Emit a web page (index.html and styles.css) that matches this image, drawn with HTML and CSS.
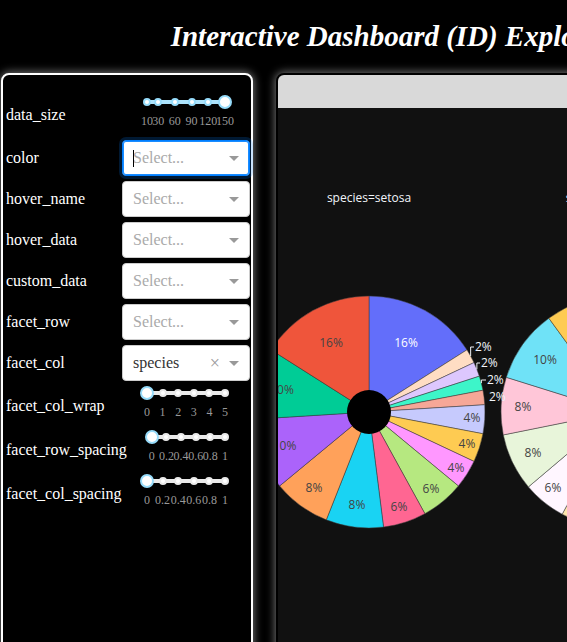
FILE: index.html
```html
<!DOCTYPE html>
<html lang="en">
<head>
<meta charset="utf-8">
<title>Interactive Dashboard (ID) Explorer</title>
<link rel="stylesheet" href="styles.css">
</head>
<body>
<div class="app">
  <header class="header">
    <h1 class="title">Interactive Dashboard (ID) Explorer</h1>
  </header>
  <main class="main">
    <aside class="controls">
      <div class="row row-slider">
        <span class="row-label">data_size</span>
        <div class="slider">
          <div class="rail">
            <div class="track" style="width:100%"></div>
            <span class="dot is-active" style="left:0%"></span>
            <span class="dot is-active" style="left:14.286%"></span>
            <span class="dot is-active" style="left:35.714%"></span>
            <span class="dot is-active" style="left:57.143%"></span>
            <span class="dot is-active" style="left:78.571%"></span>
            <span class="dot is-active" style="left:100%"></span>
            <span class="handle" style="left:100%"></span>
            <span class="mark" style="left:0%">10</span>
            <span class="mark" style="left:14.286%">30</span>
            <span class="mark" style="left:35.714%">60</span>
            <span class="mark" style="left:57.143%">90</span>
            <span class="mark" style="left:78.571%">120</span>
            <span class="mark" style="left:100%">150</span>
          </div>
        </div>
      </div>

      <div class="row row-select">
        <span class="row-label">color</span>
        <div class="select is-focused">
          <span class="select-cursor"></span>
          <span class="select-placeholder">Select...</span>
          <span class="select-arrow"></span>
        </div>
      </div>
      <div class="row row-select">
        <span class="row-label">hover_name</span>
        <div class="select">
          <span class="select-placeholder">Select...</span>
          <span class="select-arrow"></span>
        </div>
      </div>
      <div class="row row-select">
        <span class="row-label">hover_data</span>
        <div class="select">
          <span class="select-placeholder">Select...</span>
          <span class="select-arrow"></span>
        </div>
      </div>
      <div class="row row-select">
        <span class="row-label">custom_data</span>
        <div class="select">
          <span class="select-placeholder">Select...</span>
          <span class="select-arrow"></span>
        </div>
      </div>
      <div class="row row-select">
        <span class="row-label">facet_row</span>
        <div class="select">
          <span class="select-placeholder">Select...</span>
          <span class="select-arrow"></span>
        </div>
      </div>
      <div class="row row-select">
        <span class="row-label">facet_col</span>
        <div class="select">
          <span class="select-value">species</span>
          <span class="select-clear">×</span>
          <span class="select-arrow"></span>
        </div>
      </div>

      <div class="row row-slider">
        <span class="row-label">facet_col_wrap</span>
        <div class="slider">
          <div class="rail">
            <div class="track" style="width:0%"></div>
            <span class="dot" style="left:0%"></span>
            <span class="dot" style="left:20%"></span>
            <span class="dot" style="left:40%"></span>
            <span class="dot" style="left:60%"></span>
            <span class="dot" style="left:80%"></span>
            <span class="dot" style="left:100%"></span>
            <span class="handle" style="left:0%"></span>
            <span class="mark" style="left:0%">0</span>
            <span class="mark" style="left:20%">1</span>
            <span class="mark" style="left:40%">2</span>
            <span class="mark" style="left:60%">3</span>
            <span class="mark" style="left:80%">4</span>
            <span class="mark" style="left:100%">5</span>
          </div>
        </div>
      </div>
      <div class="row row-slider">
        <span class="row-label">facet_row_spacing</span>
        <div class="slider">
          <div class="rail">
            <div class="track" style="width:0%"></div>
            <span class="dot" style="left:0%"></span>
            <span class="dot" style="left:20%"></span>
            <span class="dot" style="left:40%"></span>
            <span class="dot" style="left:60%"></span>
            <span class="dot" style="left:80%"></span>
            <span class="dot" style="left:100%"></span>
            <span class="handle" style="left:0%"></span>
            <span class="mark" style="left:0%">0</span>
            <span class="mark" style="left:20%">0.2</span>
            <span class="mark" style="left:40%">0.4</span>
            <span class="mark" style="left:60%">0.6</span>
            <span class="mark" style="left:80%">0.8</span>
            <span class="mark" style="left:100%">1</span>
          </div>
        </div>
      </div>
      <div class="row row-slider">
        <span class="row-label">facet_col_spacing</span>
        <div class="slider">
          <div class="rail">
            <div class="track" style="width:0%"></div>
            <span class="dot" style="left:0%"></span>
            <span class="dot" style="left:20%"></span>
            <span class="dot" style="left:40%"></span>
            <span class="dot" style="left:60%"></span>
            <span class="dot" style="left:80%"></span>
            <span class="dot" style="left:100%"></span>
            <span class="handle" style="left:0%"></span>
            <span class="mark" style="left:0%">0</span>
            <span class="mark" style="left:20%">0.2</span>
            <span class="mark" style="left:40%">0.4</span>
            <span class="mark" style="left:60%">0.6</span>
            <span class="mark" style="left:80%">0.8</span>
            <span class="mark" style="left:100%">1</span>
          </div>
        </div>
      </div>
    </aside>

    <section class="graph-card">
      <div class="graph-bar"></div>
      <div class="graph-plot">
        <svg class="chart" width="556" height="560" viewBox="0 0 556 560">
          <g class="facet-title">
            <text x="91" y="94" text-anchor="middle">species=setosa</text>
            <text x="339" y="94" text-anchor="middle">species=versicolor</text>
          </g>
          <g class="slices">
            <path fill="#636EFA" d="M91 304 L91 188 A116 116 0 0 1 188.94 241.85 Z"/>
            <path fill="#FFDDC3" d="M91 304 L188.94 241.85 A116 116 0 0 1 195.96 254.61 Z"/>
            <path fill="#DDC7FE" d="M91 304 L195.96 254.61 A116 116 0 0 1 201.33 268.16 Z"/>
            <path fill="#3DF5C9" d="M91 304 L201.33 268.16 A116 116 0 0 1 204.95 282.26 Z"/>
            <path fill="#F6A797" d="M91 304 L204.95 282.26 A116 116 0 0 1 206.77 296.72 Z"/>
            <path fill="#C6CAFD" d="M91 304 L206.77 296.72 A116 116 0 0 1 204.95 325.74 Z"/>
            <path fill="#FECB52" d="M91 304 L204.95 325.74 A116 116 0 0 1 195.96 353.39 Z"/>
            <path fill="#FF97FF" d="M91 304 L195.96 353.39 A116 116 0 0 1 180.38 377.94 Z"/>
            <path fill="#B6E880" d="M91 304 L180.38 377.94 A116 116 0 0 1 146.89 405.65 Z"/>
            <path fill="#FF6692" d="M91 304 L146.89 405.65 A116 116 0 0 1 105.54 419.08 Z"/>
            <path fill="#19D3F3" d="M91 304 L105.54 419.08 A116 116 0 0 1 48.30 411.86 Z"/>
            <path fill="#FFA15A" d="M91 304 L48.30 411.86 A116 116 0 0 1 1.62 377.94 Z"/>
            <path fill="#AB63FA" d="M91 304 L1.62 377.94 A116 116 0 0 1 -24.77 311.28 Z"/>
            <path fill="#00CC96" d="M91 304 L-24.77 311.28 A116 116 0 0 1 -6.94 241.85 Z"/>
            <path fill="#EF553B" d="M91 304 L-6.94 241.85 A116 116 0 0 1 91 188 Z"/>

            <path fill="#FECB52" d="M339 304 L339 188 A116 116 0 1 1 339 420 Z"/>
            <path fill="#FFE6AE" d="M339 304 L339 420 A116 116 0 0 1 284.18 406.23 Z"/>
            <path fill="#FFF6FF" d="M339 304 L284.18 406.23 A116 116 0 0 1 250.40 378.88 Z"/>
            <path fill="#E8F5DA" d="M339 304 L250.40 378.88 A116 116 0 0 1 225.29 326.93 Z"/>
            <path fill="#FFC6D8" d="M339 304 L225.29 326.93 A116 116 0 0 1 228.31 269.32 Z"/>
            <path fill="#6FE2F7" d="M339 304 L228.31 269.32 A116 116 0 0 1 270.82 210.15 Z"/>
            <path fill="#FECB52" d="M339 304 L270.82 210.15 A116 116 0 0 1 339 188 Z"/>
          </g>
          <circle class="hole" cx="91" cy="304" r="22"/>
          <circle class="hole" cx="339" cy="304" r="22"/>
          <g class="leaders">
            <polyline points="192.65,248.1 192.65,239 196,239"/>
            <polyline points="198.86,261.3 198.86,255 202,255"/>
            <polyline points="203.36,275.15 203.36,272 208,272"/>
          </g>
          <g class="pct-out">
            <text x="197" y="243.3">2%</text>
            <text x="203" y="259.3">2%</text>
            <text x="209" y="276.3">2%</text>
            <text x="211" y="293.3">2%</text>
          </g>
          <g class="pct-in">
            <text class="pct-light" x="128" y="239.3">16%</text>
            <text x="53" y="239.3">16%</text>
            <text x="4" y="286.3">10%</text>
            <text x="6.5" y="342.3">10%</text>
            <text x="36" y="384.3">8%</text>
            <text x="79" y="401.3">8%</text>
            <text x="121" y="403.3">6%</text>
            <text x="153" y="385.3">6%</text>
            <text x="178" y="364.3">4%</text>
            <text x="189" y="340.3">4%</text>
            <text x="194" y="314.3">4%</text>
            <text x="267" y="256.3">10%</text>
            <text x="245" y="303.3">8%</text>
            <text x="255" y="349.3">8%</text>
            <text x="275" y="384.3">6%</text>
          </g>
        </svg>
      </div>
    </section>
  </main>
</div>
</body>
</html>
```

FILE: styles.css
```css
* {
  box-sizing: border-box;
}

html,
body {
  margin: 0;
  height: 100%;
  overflow: hidden;
  background: #000;
}

body {
  font-family: "Liberation Serif", "Times New Roman", serif;
  color: #fff;
}

.app {
  width: 1100px;
}

/* ---------- header ---------- */
.header {
  width: 782px;
  padding-top: 18px;
}

.title {
  margin: 0;
  font-size: 29px;
  line-height: 36px;
  font-style: italic;
  font-weight: bold;
  text-align: center;
  color: #fff;
}

/* ---------- main row ---------- */
.main {
  display: flex;
  align-items: flex-start;
  gap: 23px;
  padding: 19px 0 0 1px;
}

/* ---------- left controls ---------- */
.controls {
  flex: 0 0 252px;
  height: 620px;
  display: flex;
  flex-direction: column;
  padding: 18px 1px 0 3px;
  border: 2px solid #fff;
  border-radius: 8px;
  background: #000;
  box-shadow: 0 0 8px 1px rgba(255, 255, 255, 0.45);
}

.row {
  display: flex;
  align-items: center;
}

.row-label {
  flex: 1 0 auto;
  font-size: 16px;
  line-height: 20px;
  white-space: nowrap;
  color: #fff;
}

.row-select {
  height: 36px;
  margin-top: 5px;
}

.row-slider {
  height: 44px;
}

.row-slider + .row-select,
.row-select + .row-slider {
  margin-top: 3px;
}

/* dropdown */
.select {
  position: relative;
  flex: 0 1 128px;
  min-width: 0;
  height: 36px;
  display: flex;
  align-items: center;
  padding-left: 10px;
  border: 1px solid #ccc;
  border-radius: 4px;
  background: #fff;
  font-size: 16px;
  color: #aaa;
}

.select.is-focused {
  border-color: #007eff;
  box-shadow: inset 0 0 0 1px #1a8cff, 0 0 0 3px rgba(0, 126, 255, 0.2);
}

.select-cursor {
  position: absolute;
  left: 10px;
  top: 9px;
  width: 1px;
  height: 17px;
  background: #000;
}

.select-placeholder,
.select-value {
  flex: 1;
  white-space: nowrap;
  overflow: hidden;
}

.select-value {
  color: #333;
}

.select-clear {
  color: #999;
  font-size: 18px;
  line-height: 1;
  margin-right: 9px;
}

.select-arrow {
  width: 0;
  height: 0;
  margin: 3px 10px 0 0;
  border-style: solid;
  border-width: 5px 5px 2.5px;
  border-color: #999 transparent transparent;
}

/* slider */
.slider {
  flex: 0 1 128px;
  min-width: 0;
  height: 44px;
  padding: 0 25px;
}

.rail {
  position: relative;
  height: 4px;
  margin-top: 7px;
  border-radius: 6px;
  background: #e9e9e9;
}

.track {
  position: absolute;
  left: 0;
  top: 0;
  height: 4px;
  border-radius: 6px;
  background: #abe2fb;
}

.dot {
  position: absolute;
  top: -2px;
  width: 8px;
  height: 8px;
  margin-left: -4px;
  border: 2px solid #e9e9e9;
  border-radius: 50%;
  background: #fff;
}

.dot.is-active {
  border-color: #96dbfa;
}

.handle {
  position: absolute;
  top: -5px;
  width: 14px;
  height: 14px;
  margin-left: -7px;
  border: 2px solid #96dbfa;
  border-radius: 50%;
  background: #fff;
}

.mark {
  position: absolute;
  top: 14px;
  transform: translateX(-50%);
  font-size: 12px;
  line-height: 14px;
  color: #999;
  white-space: nowrap;
}

/* ---------- graph card ---------- */
.graph-card {
  flex: 0 0 560px;
  height: 620px;
  border: 2px solid #000;
  border-radius: 8px;
  overflow: hidden;
  background: #111;
  box-shadow: 0 0 8px 1px rgba(255, 255, 255, 0.45);
}

.graph-bar {
  height: 33px;
  background: #d9d9d9;
}

.graph-plot {
  background: #111;
}

.chart {
  display: block;
  font-family: "Open Sans", "Liberation Sans", sans-serif;
  font-size: 12px;
}

.facet-title text {
  fill: #f2f5fa;
}

.slices path {
  stroke: #3a3a3a;
  stroke-width: 0.5;
}

.hole {
  fill: #000;
}

.leaders polyline {
  fill: none;
  stroke: #f2f5fa;
  stroke-width: 1;
}

.pct-out text {
  fill: #f2f5fa;
}

.pct-in text {
  fill: #444;
  text-anchor: middle;
}

.pct-in .pct-light {
  fill: #fff;
}
```
